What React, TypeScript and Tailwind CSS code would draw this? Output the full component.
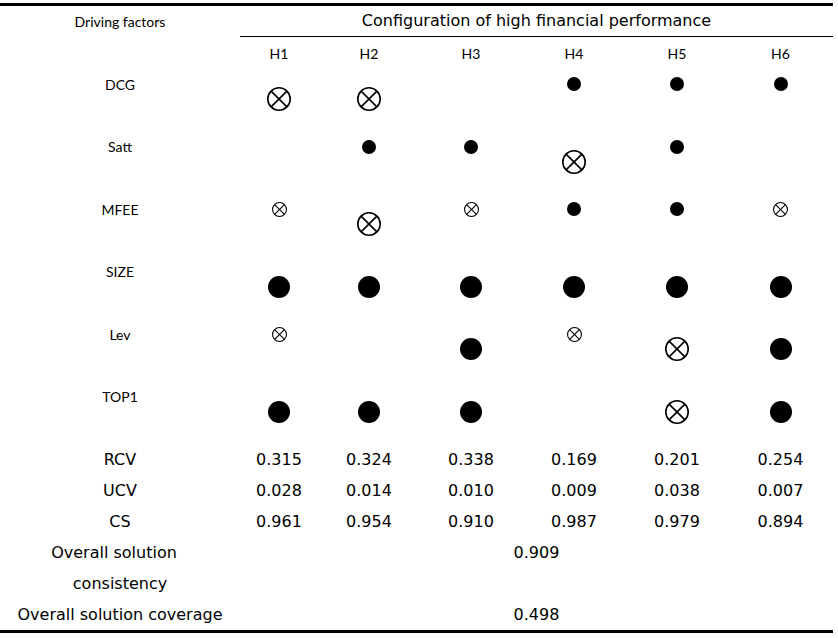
import { FC } from "react";

type Mark = "" | "dot" | "DOT" | "x" | "X";

const factors: { name: string; marks: Mark[] }[] = [
    { name: "DCG", marks: ["X", "X", "", "dot", "dot", "dot"] },
    { name: "Satt", marks: ["", "dot", "dot", "X", "dot", ""] },
    { name: "MFEE", marks: ["x", "X", "x", "dot", "dot", "x"] },
    { name: "SIZE", marks: ["DOT", "DOT", "DOT", "DOT", "DOT", "DOT"] },
    { name: "Lev", marks: ["x", "", "DOT", "x", "X", "DOT"] },
    { name: "TOP1", marks: ["DOT", "DOT", "DOT", "", "X", "DOT"] },
];

const stats = [
    { name: "RCV", values: ["0.315", "0.324", "0.338", "0.169", "0.201", "0.254"] },
    { name: "UCV", values: ["0.028", "0.014", "0.010", "0.009", "0.038", "0.007"] },
    { name: "CS", values: ["0.961", "0.954", "0.910", "0.987", "0.979", "0.894"] },
];

const Crossed: FC<{ size: number; stroke: number }> = ({ size, stroke }) => {
    const r = size / 2 - stroke / 2;
    const c = size / 2;
    const d = r * Math.SQRT1_2;
    return (
        <svg width={size} height={size} viewBox={`0 0 ${size} ${size}`}>
            <circle cx={c} cy={c} r={r} fill="none" stroke="black" strokeWidth={stroke} />
            <line x1={c - d} y1={c - d} x2={c + d} y2={c + d} stroke="black" strokeWidth={stroke} />
            <line x1={c + d} y1={c - d} x2={c - d} y2={c + d} stroke="black" strokeWidth={stroke} />
        </svg>
    );
};

const Marker: FC<{ mark: Mark }> = ({ mark }) => {
    if (mark === "dot") {
        return (
            <div className="h-[30px] flex items-center justify-center">
                <div className="w-[14px] h-[14px] rounded-full bg-black" />
            </div>
        );
    }
    if (mark === "x") {
        return (
            <div className="h-[30px] flex items-center justify-center">
                <Crossed size={15} stroke={1.1} />
            </div>
        );
    }
    if (mark === "DOT") {
        return (
            <div className="pt-[19px] flex justify-center">
                <div className="w-[22px] h-[22px] rounded-full bg-black" />
            </div>
        );
    }
    if (mark === "X") {
        return (
            <div className="pt-[18px] flex justify-center">
                <Crossed size={24} stroke={1.6} />
            </div>
        );
    }
    return <div />;
};

const small = "font-['Lato',_'Liberation_Sans',_sans-serif] text-[14px] text-black";
const big = "font-['DejaVu_Sans',_'Liberation_Sans',_sans-serif] text-[16px] text-black";

const App: FC = () => {
    return (
        <div className="w-[838px] h-[638px] bg-white pt-[3px]">
            <div className="w-[833px] border-t-[3px] border-b-[3px] border-black">
                <div className="grid grid-cols-[240px_593px] h-[31px]">
                    <div className={`${small} flex items-center justify-center`}>Driving factors</div>
                    <div className={`${big} flex items-center justify-center border-b border-black`}>
                        Configuration of high financial performance
                    </div>
                </div>
                <div className="grid grid-cols-[240px_78px_102px_102px_104px_102px_105px] h-[32px]">
                    <div />
                    {["H1", "H2", "H3", "H4", "H5", "H6"].map((h) => (
                        <div key={h} className={`${small} flex items-center justify-center`}>{h}</div>
                    ))}
                </div>
                {factors.map((f) => (
                    <div key={f.name} className="grid grid-cols-[240px_78px_102px_102px_104px_102px_105px] h-[62.5px]">
                        <div className={`${small} h-[30px] flex items-center justify-center`}>{f.name}</div>
                        {f.marks.map((m, i) => (
                            <Marker key={i} mark={m} />
                        ))}
                    </div>
                ))}
                {stats.map((s) => (
                    <div key={s.name} className="grid grid-cols-[240px_78px_102px_102px_104px_102px_105px] h-[31px]">
                        <div className={`${big} flex items-center justify-center`}>{s.name}</div>
                        {s.values.map((v, i) => (
                            <div key={i} className={`${big} flex items-center justify-center`}>{v}</div>
                        ))}
                    </div>
                ))}
                <div className="grid grid-cols-[240px_593px] h-[62px]">
                    <div className={`${big} flex flex-col items-center`}>
                        <div className="h-[31px] flex items-center pr-[12px]">Overall solution</div>
                        <div className="h-[31px] flex items-center">consistency</div>
                    </div>
                    <div className={`${big} h-[31px] flex items-center justify-center`}>0.909</div>
                </div>
                <div className="grid grid-cols-[240px_593px] h-[31px]">
                    <div className={`${big} flex items-center justify-center`}>Overall solution coverage</div>
                    <div className={`${big} flex items-center justify-center`}>0.498</div>
                </div>
            </div>
        </div>
    );
};

export default App;
